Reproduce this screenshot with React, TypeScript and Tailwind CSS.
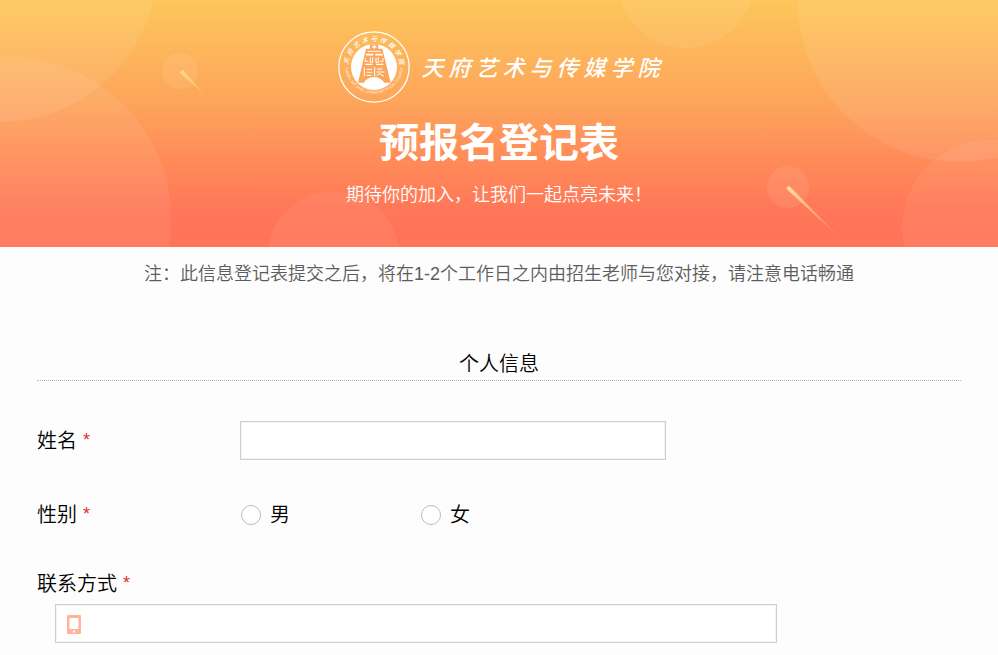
import { useState } from 'react';
import type { ReactNode } from 'react';

const SCHOOL_NAME = '天府艺术与传媒学院';

const inputClass =
  'block h-[39px] w-full border border-[#cfcfcf] bg-white text-lg text-black shadow-[inset_0_0_0_1px_#f3f3f3] outline-none focus:border-[#ff8a58]';

function HeaderBackground() {
  return (
    <svg
      className="absolute inset-0 h-full w-full"
      viewBox="0 0 998 247"
      preserveAspectRatio="xMidYMid slice"
      aria-hidden="true"
    >
      <defs>
        <linearGradient id="streakA" gradientUnits="userSpaceOnUse" x1="181" y1="71" x2="208" y2="98">
          <stop offset="0" stopColor="#ffdb86" />
          <stop offset="1" stopColor="#ffdb86" stopOpacity="0" />
        </linearGradient>
        <linearGradient id="streakB" gradientUnits="userSpaceOnUse" x1="788" y1="187" x2="842" y2="241">
          <stop offset="0" stopColor="#ffe09a" />
          <stop offset="1" stopColor="#ffd08a" stopOpacity="0" />
        </linearGradient>
      </defs>
      <g fill="#fff" fillOpacity="0.08">
        <circle cx="0" cy="-36" r="158" />
        <circle cx="8" cy="220" r="163.5" fillOpacity="0.07" />
        <circle cx="180" cy="71" r="18" />
        <circle cx="333.5" cy="258" r="66.5" fillOpacity="0.06" />
        <circle cx="686" cy="-20" r="68" fillOpacity="0.07" />
        <circle cx="960" cy="-1" r="163" />
        <circle cx="788" cy="187" r="21" />
        <circle cx="990" cy="228" r="88" fillOpacity="0.06" />
      </g>
      <path d="M179.600 72.600L182.600 69.800L208 98Z" fill="url(#streakA)" />
      <path d="M786.600 189Q786.400 186 789.600 186.200L844 242Z" fill="url(#streakB)" />
    </svg>
  );
}

function SchoolEmblem() {
  const chars = SCHOOL_NAME.split('');

  return (
    <svg className="h-[72px] w-[72px] shrink-0" viewBox="0 0 216 216" role="img" aria-label={SCHOOL_NAME}>
      <defs>
        <path id="emblemArc" d="M20 100A88 88 0 1 0 196 100" />
      </defs>
      <circle cx="108" cy="108" r="105.500" fill="none" stroke="#fff" strokeWidth="4" />
      <circle cx="108" cy="108" r="69" fill="#fff" />

      {/* name along the upper half of the ring */}
      {chars.map((char, i) => (
        <text
          key={char}
          x="108"
          y="31"
          textAnchor="middle"
          fill="#fff"
          fontSize="19"
          fontStyle="italic"
          fontWeight="500"
          fontFamily="'Noto Sans CJK SC', sans-serif"
          transform={`rotate(${(i - 4) * 19.500} 108 108)`}
        >
          {char}
        </text>
      ))}

      <text fill="#fff" fillOpacity="0.9" fontSize="12" fontFamily="'Open Sans', sans-serif">
        <textPath href="#emblemArc" startOffset="50%" textAnchor="middle">
          TIANFU ART AND COMMUNICATION COLLEGE
        </textPath>
      </text>

      {/* bell */}
      <path d="M96 40H121V53H133L158 155H60L84 53H96Z" fill="#fca65c" />
      <path d="M103 45H107V42H111V45H115V50H111V53H107V50H103Z" fill="#fff" />
      <g fill="none" stroke="#fff" strokeWidth="3">
        <path d="M89 61H128" />
        <path d="M84 71H106M112 71H134" strokeWidth="5" />
        <path d="M82 82V91H91M135 82V91H126" />
        <path d="M97 79V94H104V79M114 79V94H121V79" />
        <path d="M82 100H103M114 100H136" strokeWidth="4" />
        <path d="M79 109V136M86 115H103M86 124H103M86 133H100" />
        <path d="M110 108V136M117 114H133M116 123H139M116 134L124 128L138 136" />
      </g>
      <path d="M76 158Q86 138 108 138Q130 138 140 158Z" fill="#fff" />
    </svg>
  );
}

function Header() {
  return (
    <header className="relative overflow-hidden bg-[linear-gradient(180deg,#fdc65a_0%,#fda65b_40%,#ff8a58_66%,#ff7658_86%,#ff7358_100%)] px-4 pt-[31px] pb-[38px] text-white">
      <HeaderBackground />
      <div className="relative flex flex-col items-center">
        <div className="flex items-center gap-[11px]">
          <SchoolEmblem />
          <div className="flex gap-[5px] pt-1 text-[22px] leading-8 font-medium italic">
            {SCHOOL_NAME.split('').map((char) => (
              <span key={char}>{char}</span>
            ))}
          </div>
        </div>
        <h1 className="mt-3 text-[40px] leading-[56px] font-bold">预报名登记表</h1>
        <p className="mt-[10px] text-lg leading-7 font-[350]">期待你的加入，让我们一起点亮未来！</p>
      </div>
    </header>
  );
}

function Required() {
  return <span className="ml-[6px] align-[2px] text-lg leading-6 font-medium text-[#e62e2e]">*</span>;
}

function GenderOption({
  value,
  checked,
  onChange,
}: {
  value: string;
  checked: boolean;
  onChange: (value: string) => void;
}) {
  return (
    <label className="flex w-[180px] items-center gap-[9px]">
      <input
        type="radio"
        name="gender"
        value={value}
        checked={checked}
        onChange={() => onChange(value)}
        className="h-5 w-5 appearance-none rounded-full border border-[#bbb] bg-white checked:border-[6px] checked:border-[#ff8a58]"
      />
      {value}
    </label>
  );
}

function FormRow({ label, children }: { label: ReactNode; children: ReactNode }) {
  return (
    <div className="flex items-center">
      <div className="w-[203px] shrink-0">{label}</div>
      {children}
    </div>
  );
}

export default function App() {
  const [name, setName] = useState('');
  const [gender, setGender] = useState('');
  const [phone, setPhone] = useState('');

  return (
    <div className="min-h-screen bg-[#fdfdfd] font-['Liberation_Sans','Noto_Sans_CJK_SC',sans-serif] text-black">
      <Header />
      <main className="px-[37px] pt-[13px] pb-3">
        <p className="text-center text-lg leading-7 font-[350] text-[#5c5c5c]">
          注：此信息登记表提交之后，将在<span className="font-normal">1-2</span>
          个工作日之内由招生老师与您对接，请注意电话畅通
        </p>

        <form className="text-xl leading-7 font-[350]">
          <h2 className="mt-[62px] border-b border-dotted border-[#b5b5b5] pb-[2px]">
            <span className="block text-center">个人信息</span>
          </h2>

          <div className="mt-10 flex flex-col gap-[41px]">
            <FormRow
              label={
                <label htmlFor="name">
                  姓名
                  <Required />
                </label>
              }
            >
              <div className="w-full max-w-[426px]">
                <input
                  id="name"
                  type="text"
                  value={name}
                  onChange={(e) => setName(e.target.value)}
                  className={`${inputClass} px-3`}
                />
              </div>
            </FormRow>

            <div role="radiogroup" aria-labelledby="gender-label">
              <FormRow
                label={
                  <span id="gender-label">
                    性别
                    <Required />
                  </span>
                }
              >
                <div className="flex pl-px">
                  {['男', '女'].map((value) => (
                    <GenderOption key={value} value={value} checked={gender === value} onChange={setGender} />
                  ))}
                </div>
              </FormRow>
            </div>

            <div>
              <label htmlFor="phone" className="block">
                联系方式
                <Required />
              </label>
              <div className="relative mt-[6px] ml-[18px] max-w-[722px]">
                <input
                  id="phone"
                  type="tel"
                  value={phone}
                  onChange={(e) => setPhone(e.target.value)}
                  className={`${inputClass} pr-3 pl-10`}
                />
                <svg
                  className="pointer-events-none absolute top-[11px] left-3 h-[19px] w-[14px]"
                  viewBox="0 0 14 19"
                  aria-hidden="true"
                >
                  <path
                    fill="#ffb59c"
                    fillRule="evenodd"
                    d="M1 0H13Q14 0 14 1V18Q14 19 13 19H1Q0 19 0 18V1Q0 0 1 0ZM2.500 3V14H11.500V3ZM6 15.500V17.500H8V15.500Z"
                  />
                </svg>
              </div>
            </div>
          </div>
        </form>
      </main>
    </div>
  );
}
